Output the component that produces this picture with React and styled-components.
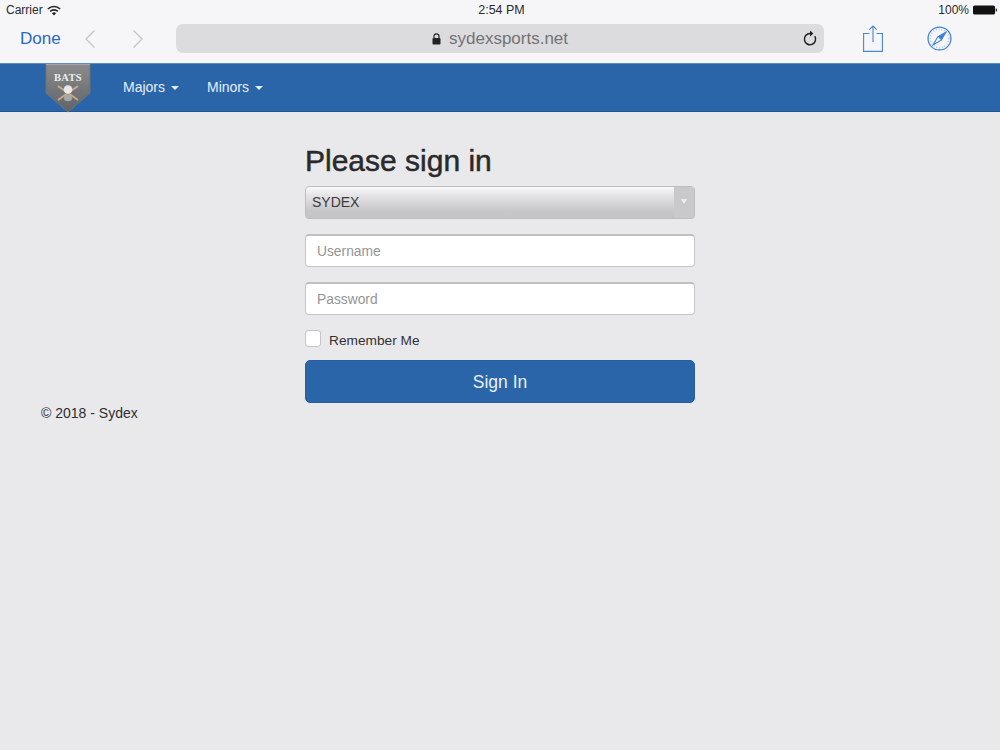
import React from 'react';
import styled, { createGlobalStyle } from 'styled-components';

const Global = createGlobalStyle`
  html, body { margin: 0; padding: 0; background: #e9e9eb; }
  body { font-family: "Liberation Sans", Arial, sans-serif; color: #2b2b2d; }
  * { box-sizing: border-box; }
`;
const Page = styled.div`width: 1000px; height: 750px; overflow: hidden; display: flex; flex-direction: column;`;
const Chrome = styled.header`height: 63px; background: #f6f6f8; display: flex; flex-direction: column; flex: none;`;
const StatusBar = styled.div`height: 20px; padding: 0 2px 0 6px; display: flex; align-items: center; justify-content: space-between; font-size: 12px; color: #2a2a2c;`;
const StatusGroup = styled.div`display: flex; align-items: center; gap: 4px;`;
const Clock = styled.div`font-size: 12.5px; font-weight: 500; margin-left: 4px;`;
const Toolbar = styled.div`height: 37px; display: flex; align-items: center; padding-left: 20px;`;
const Done = styled.span`font-size: 17.1px; color: #2a69c4; width: 64px; margin-top: 1px;`;
const NavArrows = styled.div`display: flex; align-items: center; gap: 36px; width: 92px;`;
const UrlBar = styled.div`width: 648px; height: 29px; border-radius: 7px; background: #dcdcde; position: relative; display: flex; align-items: center; justify-content: center; gap: 8px; font-size: 17px; color: #737375;`;
const Reload = styled.span`position: absolute; right: 6px; top: 6px; display: flex;`;
const ToolIcons = styled.div`display: flex; align-items: center; margin-left: 39px; gap: 44px;`;
const Navbar = styled.nav`height: 49px; flex: none; background: #2b65a9; border-top: 1px solid #5b8dc4; border-bottom: 1px solid #23558f; display: flex; align-items: center; padding-left: 45px;`;
const Logo = styled.svg`width: 46px; height: 49px; display: block; margin-right: 32px; align-self: flex-start; flex: none;`;
const Menu = styled.a`display: flex; align-items: center; gap: 6px; font-size: 14px; color: #e6eef8; margin: -1px 28px 0 0;`;
const Caret = styled.i`width: 0; height: 0; border-left: 4px solid transparent; border-right: 4px solid transparent; border-top: 4px solid #e6eef8; margin-top: 2px;`;
const Main = styled.main`display: flex; flex-direction: column; padding: 32px 41px 0;`;
const Form = styled.form`width: 390px; margin: 0 auto; display: flex; flex-direction: column;`;
const Heading = styled.h2`margin: 0 0 9px; font-size: 30px; line-height: 33px; font-weight: 500; color: #2a2a2c; -webkit-text-stroke: 0.5px #2a2a2c;`;
const Select = styled.div`height: 33px; border-radius: 4px; border: 1px solid #bdbdc0; background: linear-gradient(#f9f9fa, #e6e6e8 25%, #c8c8cb 75%, #c4c4c7); display: flex; align-items: center; justify-content: space-between; padding-left: 6px; font-size: 14px; color: #3a3a3c; margin-bottom: 15px;`;
const SelectValue = styled.span`margin-top: -1px;`;
const SelectHandle = styled.div`width: 20px; height: 100%; display: flex; align-items: center; justify-content: center; background: #c9c9cc; border-radius: 0 3px 3px 0;`;
const SelectArrow = styled.i`width: 0; height: 0; border-left: 3.5px solid transparent; border-right: 3.5px solid transparent; border-top: 5px solid #eeeeef; margin-top: -3px;`;
const Field = styled.input`height: 33px; width: 100%; border-radius: 4px; border: 1px solid #c6c6c9; border-top: 2px solid #c0c0c3; background: #fff; padding: 0 11px; font: 13.8px "Liberation Sans", Arial, sans-serif; margin-bottom: 15px; outline: 0;
  &::placeholder { color: #949496; opacity: 1; }`;
const Remember = styled.label`display: flex; align-items: center; gap: 8px; height: 17px; font-size: 13.7px; color: #333335; margin-bottom: 13px;`;
const RememberText = styled.span`padding-top: 3px;`;
const Box = styled.span`width: 16px; height: 17px; background: #fff; border: 1px solid #c4c4c7; border-radius: 3px;`;
const SignIn = styled.button`height: 43px; width: 100%; border: 1px solid #285f9f; border-radius: 5px; background: #2b65a9; color: #e6f0fa; font: 17.5px "Liberation Sans", Arial, sans-serif; padding: 1px 0 0;`;
const Footer = styled.footer`font-size: 14px; color: #2f2f31; margin-top: 2px;`;

const Chevron = ({ flip }) => (
  <svg width="12" height="20" viewBox="0 0 12 20" fill="none" stroke="#c4c4c8" strokeWidth="1.3" style={flip ? { transform: 'scaleX(-1)' } : undefined}>
    <path d="M10.5 1.5 2 10l8.5 8.5" />
  </svg>
);

export default function App() {
  return (
    <Page>
      <Global />
      <Chrome>
        <StatusBar>
          <StatusGroup>
            <span>Carrier</span>
            <svg width="14" height="11" viewBox="0 0 14 11" fill="#222">
              <path d="M7 10.5 4.9 8.2a3 3 0 0 1 4.2 0L7 10.5ZM3.7 7 2.6 5.8a6.3 6.3 0 0 1 8.8 0L10.3 7a4.7 4.7 0 0 0-6.6 0ZM1.4 4.6.3 3.4a9.6 9.6 0 0 1 13.4 0l-1.1 1.2a8 8 0 0 0-11.2 0Z" />
            </svg>
          </StatusGroup>
          <Clock>2:54 PM</Clock>
          <StatusGroup>
            <span>100%</span>
            <svg width="25" height="10" viewBox="0 0 25 10">
              <rect x="0" y="0.5" width="22" height="9" rx="1.5" fill="#111" />
              <rect x="22.6" y="3.5" width="1.4" height="3" rx="0.6" fill="#333" />
            </svg>
          </StatusGroup>
        </StatusBar>
        <Toolbar>
          <Done>Done</Done>
          <NavArrows>
            <Chevron />
            <Chevron flip />
          </NavArrows>
          <UrlBar>
            <svg width="9" height="12" viewBox="0 0 9 12">
              <path d="M2 5V3.3a2.5 2.5 0 0 1 5 0V5" fill="none" stroke="#222" strokeWidth="1.2" />
              <rect x="0.5" y="5" width="8" height="6.5" rx="1" fill="#222" />
            </svg>
            <span>sydexsports.net</span>
            <Reload>
              <svg width="16" height="17" viewBox="0 0 16 17" fill="none" stroke="#222" strokeWidth="1.5">
                <path d="M12.8 6.2a5.6 5.6 0 1 1-4.8-2.7h1.5" />
                <path d="M8 .6 11.4 3.5 8 6.4Z" fill="#222" stroke="none" />
              </svg>
            </Reload>
          </UrlBar>
          <ToolIcons>
            <svg width="20" height="27" viewBox="0 0 20 27" fill="none" stroke="#4a86cf" strokeWidth="1.1">
              <path d="M6.5 8.5H.6v17.9h18.8V8.5h-5.9" />
              <path d="M10 17V1M6.3 4.6 10 1l3.7 3.6" />
            </svg>
            <svg width="25" height="25" viewBox="0 0 24 24" fill="none" stroke="#3f80cf">
              <circle cx="12" cy="12" r="11" strokeWidth="1.2" />
              <circle cx="12" cy="12" r="8.8" strokeWidth="1.6" strokeDasharray="0.6 2.1" stroke="#8fb5e2" />
              <path d="m18 6-7.7 4.4-4.3 7.6 7.7-4.4L18 6Z" strokeWidth="1.1" />
              <path d="m10.3 10.4 3.4 3.2L18 6l-7.7 4.4Z" fill="#3f80cf" stroke="none" />
            </svg>
          </ToolIcons>
        </Toolbar>
      </Chrome>
      <Navbar>
        <Logo viewBox="0 0 46 49">
          <defs>
            <linearGradient id="shield" x1="0" y1="0" x2="0" y2="1">
              <stop offset="0" stopColor="#8b8b8c" />
              <stop offset="1" stopColor="#5f6468" />
            </linearGradient>
          </defs>
          <path d="M1 0h44v29L23 48 1 29Z" fill="url(#shield)" stroke="#6f7377" />
          <path d="M1 .5h44" stroke="#a3a5a7" />
          <text x="23" y="17" textAnchor="middle" fontFamily="'Liberation Serif', serif" fontWeight="700" fontSize="10.5" letterSpacing=".3" fill="#eeeeee">BATS</text>
          <path d="M13 22 33 36M33 22 13 36" stroke="#c9ad84" strokeWidth="1.8" />
          <circle cx="23" cy="25.5" r="4.3" fill="#e8e8e8" />
          <ellipse cx="23" cy="34" rx="4" ry="3.2" fill="#a9a9a9" />
        </Logo>
        <Menu>Majors <Caret /></Menu>
        <Menu>Minors <Caret /></Menu>
      </Navbar>
      <Main>
        <Form>
          <Heading>Please sign in</Heading>
          <Select>
            <SelectValue>SYDEX</SelectValue>
            <SelectHandle><SelectArrow /></SelectHandle>
          </Select>
          <Field placeholder="Username" readOnly />
          <Field placeholder="Password" readOnly />
          <Remember><Box /><RememberText>Remember Me</RememberText></Remember>
          <SignIn type="button">Sign In</SignIn>
        </Form>
        <Footer>© 2018 - Sydex</Footer>
      </Main>
    </Page>
  );
}
